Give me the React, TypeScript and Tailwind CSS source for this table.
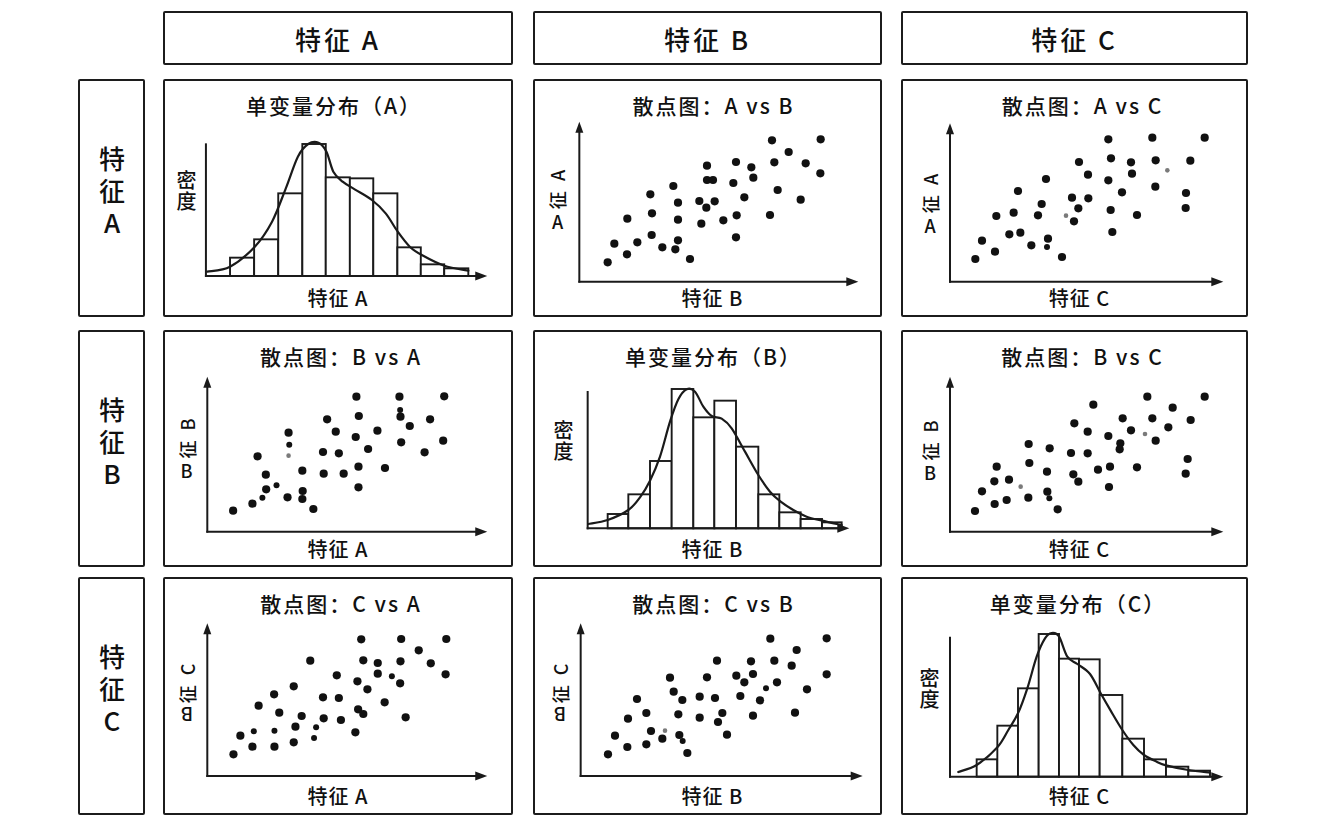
import React from "react";

type Pt = [number, number];
type Conv = { ox: number; oy: number; sx: number; sy: number };

const INK = "#1a1a1a";

const cv = (c: Conv, p: Pt): Pt => [c.ox + p[0] / c.sx, c.oy + p[1] / c.sy];

function smooth(pts: Pt[]): string {
  let d = `M${pts[0][0].toFixed(2)},${pts[0][1].toFixed(2)}`;
  for (let i = 0; i < pts.length - 1; i++) {
    const p0 = pts[i - 1] || pts[i];
    const p1 = pts[i];
    const p2 = pts[i + 1];
    const p3 = pts[i + 2] || p2;
    const c1x = p1[0] + (p2[0] - p0[0]) / 6;
    const c1y = p1[1] + (p2[1] - p0[1]) / 6;
    const c2x = p2[0] - (p3[0] - p1[0]) / 6;
    const c2y = p2[1] - (p3[1] - p1[1]) / 6;
    d += ` C${c1x.toFixed(2)},${c1y.toFixed(2)} ${c2x.toFixed(2)},${c2y.toFixed(2)} ${p2[0].toFixed(2)},${p2[1].toFixed(2)}`;
  }
  return d;
}

type AxisSpec = { yx: number; ytop: number; xy: number; xtip: number; arrowY: boolean };

function Axes({ c, a }: { c: Conv; a: AxisSpec }) {
  const [x0, y0] = cv(c, [a.yx, a.xy]);
  const [, yt] = cv(c, [a.yx, a.ytop]);
  const [xt] = cv(c, [a.xtip, a.xy]);
  return (
    <g>
      <line x1={x0} y1={a.arrowY ? yt + 8 : yt} x2={x0} y2={y0 + 1} stroke={INK} strokeWidth={2} />
      <line x1={x0 - 1} y1={y0} x2={xt - 9} y2={y0} stroke={INK} strokeWidth={2} />
      {a.arrowY && <polygon points={`${x0},${yt} ${x0 - 4},${yt + 11} ${x0 + 4},${yt + 11}`} fill={INK} />}
      <polygon points={`${xt},${y0} ${xt - 12},${y0 - 4.5} ${xt - 12},${y0 + 4.5}`} fill={INK} />
    </g>
  );
}

type ScatterData = { dots: Pt[]; small?: Pt[]; gray?: Pt[] };

function ScatterSvg({ c, a, d }: { c: Conv; a: AxisSpec; d: ScatterData }) {
  return (
    <g>
      <Axes c={c} a={a} />
      {d.dots.map((p, i) => {
        const [x, y] = cv(c, p);
        return <circle key={i} cx={x} cy={y} r={4.1} fill="#111" />;
      })}
      {(d.small || []).map((p, i) => {
        const [x, y] = cv(c, p);
        return <circle key={"s" + i} cx={x} cy={y} r={3} fill="#111" />;
      })}
      {(d.gray || []).map((p, i) => {
        const [x, y] = cv(c, p);
        return <circle key={"g" + i} cx={x} cy={y} r={2.3} fill="#7a7a7a" />;
      })}
    </g>
  );
}

type HistData = { edges: number[]; tops: number[]; base: number; curve: Pt[] };

function HistSvg({ c, a, h }: { c: Conv; a: AxisSpec; h: HistData }) {
  const curve = h.curve.map((p) => cv(c, p));
  const [, by] = cv(c, [0, h.base]);
  return (
    <g>
      {h.tops.map((t, i) => {
        const [x1, ty] = cv(c, [h.edges[i], t]);
        const [x2] = cv(c, [h.edges[i + 1], t]);
        return (
          <rect key={i} x={x1} y={ty} width={x2 - x1} height={by - ty} fill="white" stroke={INK} strokeWidth={1.9} />
        );
      })}
      <path d={smooth(curve)} fill="none" stroke={INK} strokeWidth={2.2} strokeLinecap="round" />
      <Axes c={c} a={a} />
    </g>
  );
}

type CellProps = {
  left: number;
  top: number;
  w: number;
  boxCls: string;
  titleCls: string;
  labelCls: string;
  xCls: string;
  title: string;
  xLabel: string;
  yLabel: React.ReactNode;
  children: React.ReactNode;
};

function Cell(p: CellProps) {
  const vx = p.left + 42;
  const vy = p.top + 40;
  const vw = p.w - 44;
  return (
    <div className={`flex flex-col border-2 border-[#1c1c1c] rounded-[2px] shrink-0 ${p.boxCls}`}>
      <div className={`h-[38px] pt-[10px] text-center text-[21px] leading-[28px] tracking-[2px] whitespace-nowrap ${p.titleCls}`}>
        {p.title}
      </div>
      <div className="flex h-[170px]">
        <div className={`w-[40px] shrink-0 flex items-center justify-center ${p.labelCls}`}>{p.yLabel}</div>
        <svg width={vw} height={170} viewBox={`${vx} ${vy} ${vw} 170`} className="block overflow-visible shrink-0">
          {p.children}
        </svg>
      </div>
      <div className={`text-center text-[20px] leading-[18px] tracking-[1px] whitespace-nowrap ${p.xCls}`}>{p.xLabel}</div>
    </div>
  );
}

function YLab({ a, b, flip }: { a: string; b: string; flip?: boolean }) {
  return (
    <div className="flex flex-col items-center text-[18px] leading-[18px]">
      <div className="w-[18px] h-[44px] flex items-center justify-center">
        <span className="block -rotate-90 whitespace-nowrap tracking-[3px]">征 {b}</span>
      </div>
      <span className={`block mt-[2px] ${flip ? "rotate-180" : ""}`}>{a}</span>
    </div>
  );
}

function Density() {
  return (
    <div className="[writing-mode:vertical-rl] text-[20px] leading-[22px] tracking-[1px] whitespace-nowrap">密度</div>
  );
}

function RowHead({ t }: { t: string }) {
  return (
    <div className="w-[67px] shrink-0 border-2 border-[#1c1c1c] rounded-[2px] flex items-center justify-center pb-[8px]">
      <div className="[writing-mode:vertical-rl] [text-orientation:upright] text-[26px] leading-[30px] tracking-[6px] whitespace-nowrap">
        {t}
      </div>
    </div>
  );
}

function ColHead({ cls, t }: { cls: string; t: string }) {
  return (
    <div className={`shrink-0 border-2 border-[#1c1c1c] rounded-[2px] flex items-center justify-center text-[26px] tracking-[3px] ${cls}`}>
      {t}
    </div>
  );
}

/* ---------- data (measured in zoom coordinates) ---------- */

const cA0: Conv = { ox: 0, oy: 0, sx: 2.904, sy: 3 };
const cB0: Conv = { ox: 530, oy: 0, sx: 3, sy: 3 };
const cC0: Conv = { ox: 890, oy: 0, sx: 3, sy: 3 };
const cA1: Conv = { ox: 0, oy: 310, sx: 2.904, sy: 3 };
const cB1: Conv = { ox: 530, oy: 310, sx: 3, sy: 3 };
const cC1: Conv = { ox: 890, oy: 310, sx: 3, sy: 3 };
const cA2: Conv = { ox: 0, oy: 560, sx: 2.904, sy: 3 };
const cB2: Conv = { ox: 530, oy: 560, sx: 3, sy: 3 };
const cC2: Conv = { ox: 890, oy: 560, sx: 3, sy: 3 };

const histAA: HistData = {
  edges: [668, 738, 808, 878, 946, 1016, 1084, 1154, 1222, 1290, 1360],
  tops: [773, 718, 580, 432, 532, 535, 580, 742, 793, 805],
  base: 828,
  curve: [
    [602, 815], [668, 800], [740, 740], [790, 665], [830, 565], [865, 470], [895, 432], [925, 428], [948, 455],
    [968, 515], [995, 545], [1030, 568], [1080, 600], [1120, 640], [1155, 695], [1190, 740], [1225, 765],
    [1290, 797], [1360, 812],
  ],
};

const histBB: HistData = {
  edges: [233, 295, 360, 425, 490, 553, 618, 685, 748, 812, 876, 935],
  tops: [612, 553, 453, 237, 322, 272, 410, 553, 607, 627, 637],
  base: 655,
  curve: [
    [175, 642], [233, 630], [295, 600], [330, 562], [360, 512], [390, 440], [420, 335], [445, 268], [470, 238],
    [495, 245], [520, 290], [545, 318], [575, 326], [605, 355], [645, 425], [685, 495], [720, 545], [752, 575],
    [790, 600], [830, 620], [876, 632], [935, 645],
  ],
};

const histCC: HistData = {
  edges: [260, 322, 384, 446, 507, 567, 629, 697, 762, 828, 895, 960],
  tops: [598, 497, 385, 222, 296, 298, 405, 536, 598, 620, 632],
  base: 650,
  curve: [
    [205, 636], [260, 615], [322, 562], [355, 510], [384, 460], [412, 385], [440, 290], [465, 235], [485, 219],
    [507, 229], [532, 290], [562, 312], [600, 342], [632, 400], [662, 452], [697, 510], [730, 555], [762, 585],
    [800, 605], [828, 616], [895, 630], [960, 638],
  ],
};

const scAB: ScatterData = {
  dots: [
    [233, 787], [253, 731], [291, 763], [292, 656], [322, 727], [361, 583], [366, 640], [365, 705], [397, 742],
    [430, 558], [436, 748], [444, 721], [444, 608], [444, 659], [480, 777], [508, 603], [514, 671], [529, 623],
    [531, 497], [531, 540], [549, 540], [554, 604], [580, 661], [610, 549], [618, 486], [620, 646], [618, 712],
    [643, 592], [664, 502], [670, 533], [720, 645], [726, 421], [733, 487], [743, 570], [776, 456], [812, 599],
    [827, 490], [872, 418], [871, 520],
  ],
};

const scAC: ScatterData = {
  dots: [
    [256, 777], [276, 722], [315, 755], [319, 648], [358, 703], [371, 638], [384, 573], [391, 698], [424, 736],
    [444, 646], [455, 612], [468, 537], [474, 716], [516, 771], [546, 593], [552, 664], [565, 625],
    [567, 486], [594, 524], [595, 595], [655, 418], [663, 475], [655, 541], [662, 630], [667, 696], [696, 577],
    [723, 487], [726, 521], [741, 645], [787, 413], [797, 481], [796, 560], [888, 579], [887, 624], [901, 482],
    [944, 413],
  ],
  small: [[471, 741]],
  gray: [[528, 647], [832, 511]],
};

const scBA: ScatterData = {
  dots: [
    [677, 602], [733, 581], [773, 538], [772, 494], [748, 439], [835, 562], [838, 368],
    [878, 482], [879, 543], [878, 567], [910, 597], [938, 426], [940, 491], [950, 328], [975, 365], [984, 430],
    [998, 491], [1035, 260], [1042, 318], [1033, 381], [1041, 470], [1041, 532], [1069, 417], [1096, 362],
    [1118, 474], [1160, 260], [1163, 320], [1165, 397], [1190, 348], [1233, 427], [1249, 328], [1287, 392],
    [1290, 259],
  ],
  small: [[762, 563], [803, 526], [840, 404], [1162, 300]],
  gray: [[838, 437]],
};

const scBC: ScatterData = {
  dots: [
    [255, 603], [276, 544], [314, 582], [313, 514], [320, 470], [350, 570], [357, 509], [416, 402], [418, 459],
    [415, 563], [471, 485], [472, 545], [479, 415], [503, 598], [543, 429], [550, 493], [553, 340], [565, 515],
    [593, 365], [593, 430], [610, 284], [624, 479], [655, 378], [660, 470], [657, 531], [691, 400], [689, 418],
    [698, 325], [723, 361], [741, 472], [772, 260], [787, 325], [797, 392], [835, 352], [848, 293], [893, 447],
    [887, 491], [902, 330], [944, 260],
  ],
  small: [[478, 565]],
  gray: [[392, 530], [765, 372]],
};

const scCA: ScatterData = {
  dots: [
    [678, 583], [698, 527], [733, 560], [751, 437], [796, 403], [797, 560], [811, 458], [853, 379],
    [853, 547], [858, 500], [876, 468], [901, 302], [938, 412], [940, 475], [978, 346], [984, 414],
    [990, 480], [1032, 517], [1038, 364], [1040, 448], [1049, 238], [1055, 301], [1055, 462], [1067, 388],
    [1097, 309], [1097, 341], [1117, 427], [1162, 370], [1163, 304], [1165, 237], [1178, 472], [1216, 271],
    [1251, 310], [1294, 343], [1296, 237],
  ],
  small: [[737, 514], [797, 512], [912, 534], [918, 502], [1138, 349]],
};

const scCB: ScatterData = {
  dots: [
    [234, 583], [255, 527], [292, 561], [294, 476], [321, 417], [349, 459], [349, 553], [363, 513], [397, 536],
    [420, 353], [431, 395], [445, 463], [448, 525], [457, 420], [472, 579], [509, 410], [509, 473],
    [531, 352], [555, 414], [561, 302], [564, 486], [577, 459], [591, 524], [619, 347], [631, 408], [643, 367],
    [663, 304], [669, 342], [669, 467], [690, 421], [721, 236], [733, 302], [741, 367], [785, 317],
    [795, 458], [800, 270], [831, 388], [890, 235], [890, 343],
  ],
  small: [[458, 543], [708, 385]],
  gray: [[405, 512]],
};

export default function App() {
  return (
    <div className="w-[1329px] h-[824px] bg-white text-[#111] font-medium pl-[78px] pt-[11px] overflow-hidden font-['Noto_Sans_CJK_SC','Noto_Sans',sans-serif]">
      {/* column headers */}
      <div className="flex h-[54px]">
        <div className="w-[67px] shrink-0" />
        <ColHead cls="ml-[18px] w-[350px]" t="特征 A" />
        <ColHead cls="ml-[20px] w-[349px]" t="特征 B" />
        <ColHead cls="ml-[19px] w-[347px]" t="特征 C" />
      </div>

      {/* row A */}
      <div className="flex mt-[14px] h-[238px]">
        <RowHead t="特征A" />
        <Cell left={163} top={79} w={350} boxCls="ml-[18px] w-[350px]" titleCls="pr-[8px]" labelCls="pl-[2px] pb-[26px]" xCls="pl-[0px]" title="单变量分布（A）" xLabel="特征 A" yLabel={<Density />}>
          <HistSvg c={cA0} a={{ yx: 598, ytop: 430, xy: 828, xtip: 1415, arrowY: false }} h={histAA} />
        </Cell>
        <Cell left={533} top={79} w={349} boxCls="ml-[20px] w-[349px]" titleCls="pl-[12px]" labelCls="pl-[5px] pb-[12px]" xCls="pl-[10px]" title="散点图：A vs B" xLabel="特征 B" yLabel={<YLab a="A" b="A" />}>
          <ScatterSvg c={cB0} a={{ yx: 148, ytop: 365, xy: 845, xtip: 985, arrowY: true }} d={scAB} />
        </Cell>
        <Cell left={901} top={79} w={347} boxCls="ml-[19px] w-[347px]" titleCls="pl-[16px]" labelCls="pl-[14px] pb-[4px]" xCls="pl-[10px]" title="散点图：A vs C" xLabel="特征 C" yLabel={<YLab a="A" b="A" />}>
          <ScatterSvg c={cC0} a={{ yx: 180, ytop: 370, xy: 845, xtip: 1000, arrowY: true }} d={scAC} />
        </Cell>
      </div>

      {/* row B */}
      <div className="flex mt-[13px] h-[237px]">
        <RowHead t="特征B" />
        <Cell left={163} top={330} w={350} boxCls="ml-[18px] w-[350px]" titleCls="pl-[6px]" labelCls="pl-[3px] pb-[16px]" xCls="pl-[0px]" title="散点图：B vs A" xLabel="特征 A" yLabel={<YLab a="B" b="B" />}>
          <ScatterSvg c={cA1} a={{ yx: 602, ytop: 200, xy: 665, xtip: 1415, arrowY: true }} d={scBA} />
        </Cell>
        <Cell left={533} top={330} w={349} boxCls="ml-[20px] w-[349px]" titleCls="pl-[12px]" labelCls="pl-[16px] pb-[28px]" xCls="pl-[10px]" title="单变量分布（B）" xLabel="特征 B" yLabel={<Density />}>
          <HistSvg c={cB1} a={{ yx: 173, ytop: 243, xy: 655, xtip: 958, arrowY: false }} h={histBB} />
        </Cell>
        <Cell left={901} top={330} w={347} boxCls="ml-[19px] w-[347px]" titleCls="pl-[16px]" labelCls="pl-[14px] pb-[12px]" xCls="pl-[10px]" title="散点图：B vs C" xLabel="特征 C" yLabel={<YLab a="B" b="B" />}>
          <ScatterSvg c={cC1} a={{ yx: 180, ytop: 200, xy: 665, xtip: 1000, arrowY: true }} d={scBC} />
        </Cell>
      </div>

      {/* row C */}
      <div className="flex mt-[10px] h-[238px]">
        <RowHead t="特征C" />
        <Cell left={163} top={577} w={350} boxCls="ml-[18px] w-[350px]" titleCls="pl-[6px]" labelCls="pl-[4px] pb-[20px]" xCls="pl-[0px]" title="散点图：C vs A" xLabel="特征 A" yLabel={<YLab a="B" b="C" flip />}>
          <ScatterSvg c={cA2} a={{ yx: 602, ytop: 190, xy: 648, xtip: 1415, arrowY: true }} d={scCA} />
        </Cell>
        <Cell left={533} top={577} w={349} boxCls="ml-[20px] w-[349px]" titleCls="pl-[12px]" labelCls="pl-[11px] pb-[20px]" xCls="pl-[10px]" title="散点图：C vs B" xLabel="特征 B" yLabel={<YLab a="B" b="C" flip />}>
          <ScatterSvg c={cB2} a={{ yx: 152, ytop: 190, xy: 648, xtip: 998, arrowY: true }} d={scCB} />
        </Cell>
        <Cell left={901} top={577} w={347} boxCls="ml-[19px] w-[347px]" titleCls="pl-[7px]" labelCls="pl-[12px] pb-[26px]" xCls="pl-[10px]" title="单变量分布（C）" xLabel="特征 C" yLabel={<Density />}>
          <HistSvg c={cC2} a={{ yx: 180, ytop: 230, xy: 650, xtip: 1000, arrowY: false }} h={histCC} />
        </Cell>
      </div>
    </div>
  );
}
